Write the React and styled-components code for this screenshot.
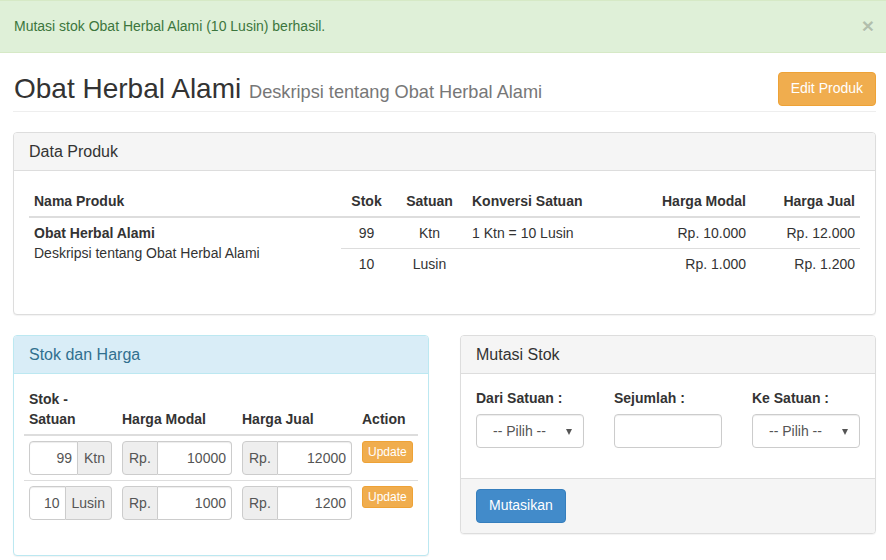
import styled, { createGlobalStyle } from "styled-components"

const GlobalStyle = createGlobalStyle`
  * { box-sizing: border-box; }
  body {
    margin: 0;
    font-family: "Liberation Sans", Arial, sans-serif;
    font-size: 14px;
    line-height: 1.428571;
    color: #333;
    background: #fff;
  }
`

const produk = {
  nama: "Obat Herbal Alami",
  deskripsi: "Deskripsi tentang Obat Herbal Alami",
}

const satuanList = [
  { stok: 99, satuan: "Ktn", konversi: "1 Ktn = 10 Lusin", modal: 10000, jual: 12000 },
  { stok: 10, satuan: "Lusin", konversi: "", modal: 1000, jual: 1200 },
]

const rupiah = (n) => "Rp. " + n.toLocaleString("de-DE")

export default function App() {
  return (
    <>
      <GlobalStyle />
      <Alert>
        <span>Mutasi stok Obat Herbal Alami (10 Lusin) berhasil.</span>
        <Close>×</Close>
      </Alert>
      <Page>
        <PageHeader>
          <Title>
            {produk.nama} <small>{produk.deskripsi}</small>
          </Title>
          <Button $variant="warning">Edit Produk</Button>
        </PageHeader>

        <Panel>
          <PanelHeading>Data Produk</PanelHeading>
          <PanelBody $pad={15}>
            <Table>
              <colgroup>
                <col style={{ width: 312 }} />
                <col style={{ width: 51 }} />
                <col style={{ width: 75 }} />
                <col style={{ width: 180 }} />
                <col style={{ width: 104 }} />
                <col style={{ width: 109 }} />
              </colgroup>
              <thead>
                <tr>
                  <Th>Nama Produk</Th>
                  <Th $align="center">Stok</Th>
                  <Th $align="center">Satuan</Th>
                  <Th>Konversi Satuan</Th>
                  <Th $align="right">Harga Modal</Th>
                  <Th $align="right">Harga Jual</Th>
                </tr>
              </thead>
              <tbody>
                {satuanList.map((s, i) => (
                  <tr key={s.satuan}>
                    {i === 0 && (
                      <Td rowSpan={satuanList.length} $valign="top">
                        <b>{produk.nama}</b>
                        <br />
                        {produk.deskripsi}
                      </Td>
                    )}
                    <Td $align="center">{s.stok}</Td>
                    <Td $align="center">{s.satuan}</Td>
                    <Td>{s.konversi}</Td>
                    <Td $align="right">{rupiah(s.modal)}</Td>
                    <Td $align="right">{rupiah(s.jual)}</Td>
                  </tr>
                ))}
              </tbody>
            </Table>
          </PanelBody>
        </Panel>

        <Columns>
          <Panel $variant="info">
            <PanelHeading $variant="info">Stok dan Harga</PanelHeading>
            <PanelBody $pad={10}>
              <Table>
                <colgroup>
                  <col style={{ width: 93 }} />
                  <col style={{ width: 120 }} />
                  <col style={{ width: 120 }} />
                  <col style={{ width: 61 }} />
                </colgroup>
                <thead>
                  <tr>
                    <Th $valign="bottom">Stok - Satuan</Th>
                    <Th $valign="bottom">Harga Modal</Th>
                    <Th $valign="bottom">Harga Jual</Th>
                    <Th $valign="bottom">Action</Th>
                  </tr>
                </thead>
                <tbody>
                  {satuanList.map((s) => (
                    <tr key={s.satuan}>
                      <Td>
                        <InputGroup>
                          <Input defaultValue={s.stok} $right />
                          <Addon $side="right">{s.satuan}</Addon>
                        </InputGroup>
                      </Td>
                      <Td>
                        <InputGroup>
                          <Addon $side="left">Rp.</Addon>
                          <Input defaultValue={s.modal} $left />
                        </InputGroup>
                      </Td>
                      <Td>
                        <InputGroup>
                          <Addon $side="left">Rp.</Addon>
                          <Input defaultValue={s.jual} $left />
                        </InputGroup>
                      </Td>
                      <Td $valign="top">
                        <Button $variant="warning" $size="xs">Update</Button>
                      </Td>
                    </tr>
                  ))}
                </tbody>
              </Table>
            </PanelBody>
          </Panel>

          <Panel>
            <PanelHeading>Mutasi Stok</PanelHeading>
            <PanelBody $pad={15}>
              <FormRow>
                <FormGroup>
                  <Label>Dari Satuan :</Label>
                  <SelectWrap>
                    <Select defaultValue="">
                      <option value="">-- Pilih --</option>
                      <option>Ktn</option>
                      <option>Lusin</option>
                    </Select>
                  </SelectWrap>
                </FormGroup>
                <FormGroup>
                  <Label>Sejumlah :</Label>
                  <TextInput />
                </FormGroup>
                <FormGroup>
                  <Label>Ke Satuan :</Label>
                  <SelectWrap>
                    <Select defaultValue="">
                      <option value="">-- Pilih --</option>
                      <option>Ktn</option>
                      <option>Lusin</option>
                    </Select>
                  </SelectWrap>
                </FormGroup>
              </FormRow>
            </PanelBody>
            <PanelFooter>
              <Button $variant="primary">Mutasikan</Button>
            </PanelFooter>
          </Panel>
        </Columns>
      </Page>
    </>
  )
}

const Alert = styled.div`
  display: flex;
  align-items: center;
  justify-content: space-between;
  padding: 14px 12px 16px 14px;
  background: #dff0d8;
  border-top: 1px solid #d6e9c6;
  border-bottom: 1px solid #d6e9c6;
  color: #3c763d;
  line-height: 20px;
`

const Close = styled.span`
  font-size: 21px;
  font-weight: bold;
  line-height: 1;
  color: #000;
  opacity: 0.2;
  text-shadow: 0 1px 0 #fff;
`

const Page = styled.div`
  display: flex;
  flex-direction: column;
  padding: 0 10px 0 13px;
`

const PageHeader = styled.div`
  display: flex;
  align-items: center;
  justify-content: space-between;
  margin: 19px 0 20px;
  padding: 0 0 5px 1px;
  border-bottom: 1px solid #eee;
`

const Title = styled.h1`
  margin: 0;
  font-size: 28px;
  font-weight: 500;
  line-height: 1.1;
  color: #333;

  small {
    font-size: 65%;
    font-weight: normal;
    color: #777;
  }
`

const Button = styled.button`
  font-family: inherit;
  font-size: ${(p) => (p.$size === "xs" ? "12px" : "14px")};
  line-height: ${(p) => (p.$size === "xs" ? "1.5" : "1.428571")};
  padding: ${(p) => (p.$size === "xs" ? "1px 5px" : "6px 12px")};
  border-radius: ${(p) => (p.$size === "xs" ? "3px" : "4px")};
  color: #fff;
  cursor: pointer;
  background: ${(p) => (p.$variant === "primary" ? "#428bca" : "#f0ad4e")};
  border: 1px solid ${(p) => (p.$variant === "primary" ? "#357ebd" : "#eea236")};
`

const Panel = styled.div`
  margin-bottom: 20px;
  background: #fff;
  border: 1px solid ${(p) => (p.$variant === "info" ? "#bce8f1" : "#ddd")};
  border-radius: 4px;
  box-shadow: 0 1px 1px rgba(0, 0, 0, 0.05);
  overflow: hidden;
`

const PanelHeading = styled.div`
  height: 38px;
  padding: 0 15px;
  display: flex;
  align-items: center;
  font-size: 16px;
  line-height: 1.1;
  background: ${(p) => (p.$variant === "info" ? "#d9edf7" : "#f5f5f5")};
  color: ${(p) => (p.$variant === "info" ? "#31708f" : "#333")};
  border-bottom: 1px solid ${(p) => (p.$variant === "info" ? "#bce8f1" : "#ddd")};
`

const PanelBody = styled.div`
  padding: ${(p) => p.$pad}px;
`

const PanelFooter = styled.div`
  padding: 10px 15px;
  background: #f5f5f5;
  border-top: 1px solid #ddd;
`

const Table = styled.table`
  width: 100%;
  table-layout: fixed;
  border-collapse: collapse;
  margin-bottom: 20px;
`

const Th = styled.th`
  padding: 5px;
  text-align: ${(p) => p.$align || "left"};
  vertical-align: ${(p) => p.$valign || "bottom"};
  border-bottom: 2px solid #ddd;
  font-weight: bold;
  line-height: 20px;
`

const Td = styled.td`
  padding: 5px;
  text-align: ${(p) => p.$align || "left"};
  vertical-align: ${(p) => p.$valign || "top"};
  border-top: 1px solid #ddd;
  line-height: 20px;
`

const InputGroup = styled.div`
  display: flex;
  width: 100%;
  height: 34px;
`

const Input = styled.input`
  flex: 1;
  min-width: 0;
  font-family: inherit;
  font-size: 14px;
  color: #555;
  text-align: right;
  padding: 6px 5px;
  border: 1px solid #ccc;
  box-shadow: inset 0 1px 1px rgba(0, 0, 0, 0.075);
  border-radius: ${(p) => (p.$right ? "4px 0 0 4px" : "0 4px 4px 0")};
  border-left-width: ${(p) => (p.$left ? "0" : "1px")};
`

const Addon = styled.span`
  display: flex;
  align-items: center;
  padding: 6px;
  font-size: 14px;
  color: #555;
  background: #eee;
  border: 1px solid #ccc;
  border-radius: ${(p) => (p.$side === "left" ? "4px 0 0 4px" : "0 4px 4px 0")};
  border-left-width: ${(p) => (p.$side === "right" ? "0" : "1px")};
`

const Columns = styled.div`
  display: grid;
  grid-template-columns: 1fr 1fr;
  column-gap: 31px;
  align-items: start;
`

const FormRow = styled.div`
  display: grid;
  grid-template-columns: repeat(3, 1fr);
  column-gap: 30px;
`

const FormGroup = styled.div`
  margin-bottom: 15px;
`

const Label = styled.label`
  display: block;
  margin-bottom: 5px;
  font-weight: bold;
`

const SelectWrap = styled.div`
  position: relative;

  &::after {
    content: "";
    position: absolute;
    right: 12px;
    top: 15px;
    border-left: 3.5px solid transparent;
    border-right: 3.5px solid transparent;
    border-top: 6px solid #555;
    pointer-events: none;
  }
`

const Select = styled.select`
  display: block;
  width: 100%;
  height: 34px;
  padding: 6px 20px 6px 16px;
  font-family: inherit;
  font-size: 14px;
  color: #555;
  background: #fff;
  border: 1px solid #ccc;
  border-radius: 4px;
  box-shadow: inset 0 1px 1px rgba(0, 0, 0, 0.075);
  appearance: none;
`

const TextInput = styled.input`
  display: block;
  width: 100%;
  height: 34px;
  padding: 6px 12px;
  font-family: inherit;
  font-size: 14px;
  color: #555;
  border: 1px solid #ccc;
  border-radius: 4px;
  box-shadow: inset 0 1px 1px rgba(0, 0, 0, 0.075);
`
